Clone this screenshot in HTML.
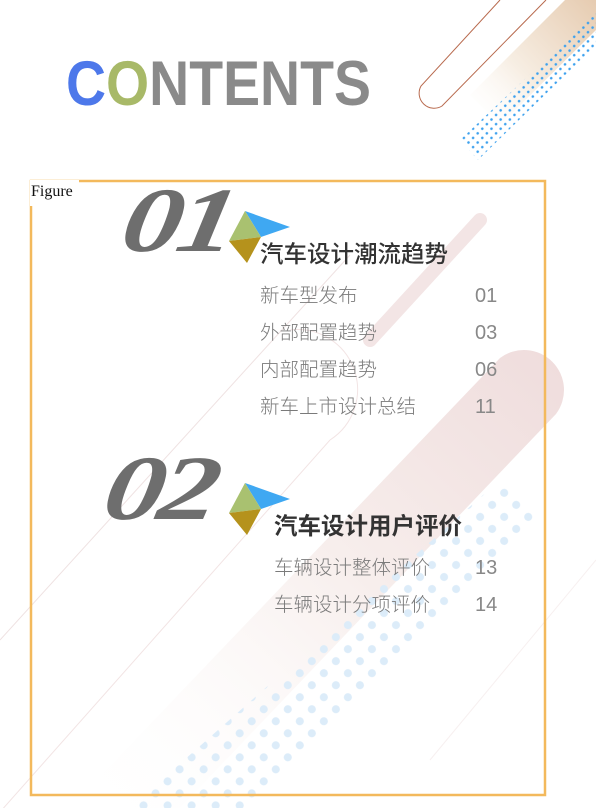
<!DOCTYPE html>
<html><head><meta charset="utf-8"><style>
html,body{margin:0;padding:0;background:#fff;}
body{width:596px;height:808px;position:relative;overflow:hidden;font-family:"Liberation Sans","Noto Sans CJK SC",sans-serif;}
.abs{position:absolute;}
.title{left:66px;top:48px;font-size:63px;font-weight:bold;color:#8a8a8a;letter-spacing:0px;line-height:72px;font-family:"Liberation Sans","DejaVu Sans",sans-serif;transform:scaleX(0.88);transform-origin:left;}
.num{font-family:"Liberation Serif",serif;font-weight:bold;font-style:italic;color:#6e6e6e;font-size:92px;line-height:92px;letter-spacing:-4px;transform:scaleX(1.3) skewX(-8deg);transform-origin:left;}
.h{font-size:23.5px;color:#333;font-weight:500;line-height:28px;}
.it{font-size:19.5px;color:#7a7a7a;font-weight:300;line-height:24px;}
.pn{font-size:20px;color:#888;font-weight:300;line-height:24px;}
</style></head><body>
<svg class="abs" style="left:0;top:0" width="596" height="808" viewBox="0 0 596 808">
<defs>
<linearGradient id="pink" x1="1" y1="0" x2="0" y2="1">
<stop offset="0" stop-color="#efdcdc"/><stop offset="0.45" stop-color="#f7eeec"/><stop offset="1" stop-color="#fff" stop-opacity="0"/></linearGradient>
<linearGradient id="beige" x1="1" y1="0" x2="0" y2="1">
<stop offset="0" stop-color="#e2c3a4"/><stop offset="0.6" stop-color="#f6ece0"/><stop offset="1" stop-color="#fff" stop-opacity="0"/></linearGradient>
<pattern id="dots" width="6.5" height="6.5" patternUnits="userSpaceOnUse" patternTransform="rotate(-45)">
<circle cx="3" cy="3" r="1.3" fill="#3da1ee"/></pattern>
<pattern id="dots2" width="17" height="17" patternUnits="userSpaceOnUse" patternTransform="rotate(-45)">
<circle cx="8" cy="8" r="4" fill="#dcecf9"/></pattern>
</defs>
<path d="M596 -10 L575 -10 L470 95 L500 125 L596 30 Z" fill="url(#beige)" opacity="0.9"/>
<polygon points="596,12 596,45 478,160 460,140" fill="url(#dots)"/>
<path d="M500 0 L421 86 A15 15 0 0 0 442 106 L546 0" fill="none" stroke="#b86a4e" stroke-width="1"/>
<line x1="480" y1="220" x2="370" y2="340" stroke="#f3e5e5" stroke-width="14" stroke-linecap="round"/>
<path d="M500 358 A40 40 0 0 1 556 414 L180 808 L70 808 Z" fill="url(#pink)"/>
<polygon points="500,480 540,520 250,808 130,808" fill="url(#dots2)"/>
<line x1="350" y1="255" x2="0" y2="640" stroke="#efe2e2" stroke-width="1"/>
<path d="M0 812 L330 440 A60 60 0 0 0 290 330" fill="none" stroke="#f2e4e4" stroke-width="1"/>
<line x1="596" y1="560" x2="430" y2="760" stroke="#f7f0f0" stroke-width="1"/>
<rect x="31" y="181" width="514" height="614" fill="none" stroke="#f3b95c" stroke-width="2.5"/>
<g>
<polygon points="245,211 290,227 261,237" fill="#3fa8f2"/>
<polygon points="245,211 261,237 229,241" fill="#a9c170"/>
<polygon points="229,241 261,237 247,263" fill="#b5921c"/>
</g>
<g transform="translate(0,272)">
<polygon points="245,211 290,227 261,237" fill="#3fa8f2"/>
<polygon points="245,211 261,237 229,241" fill="#a9c170"/>
<polygon points="229,241 261,237 247,263" fill="#b5921c"/>
</g>
</svg>
<div class="abs title"><span style="color:#4d78ea">C</span><span style="color:#a8b968">O</span>NTENTS</div>
<div class="abs" style="left:30px;top:180px;width:48px;height:26px;background:#fff;font-family:'Liberation Serif',serif;font-size:16px;line-height:24px;color:#111;padding-left:1px;">Figure</div>
<div class="abs num" style="left:124px;top:174px;">01</div>
<div class="abs num" style="left:106px;top:442px;">02</div>
<div class="abs h" style="left:260px;top:240px;">汽车设计潮流趋势</div>
<div class="abs it" style="left:260px;top:284px;">新车型发布</div>
<div class="abs it" style="left:260px;top:321px;">外部配置趋势</div>
<div class="abs it" style="left:260px;top:358px;">内部配置趋势</div>
<div class="abs it" style="left:260px;top:395px;">新车上市设计总结</div>
<div class="abs pn" style="left:475px;top:284px;">01</div>
<div class="abs pn" style="left:475px;top:321px;">03</div>
<div class="abs pn" style="left:475px;top:358px;">06</div>
<div class="abs pn" style="left:475px;top:395px;">11</div>
<div class="abs h" style="left:274px;top:512px;font-weight:bold;">汽车设计用户评价</div>
<div class="abs it" style="left:274px;top:556px;">车辆设计整体评价</div>
<div class="abs it" style="left:274px;top:593px;">车辆设计分项评价</div>
<div class="abs pn" style="left:475px;top:556px;">13</div>
<div class="abs pn" style="left:475px;top:593px;">14</div>
</body></html>
